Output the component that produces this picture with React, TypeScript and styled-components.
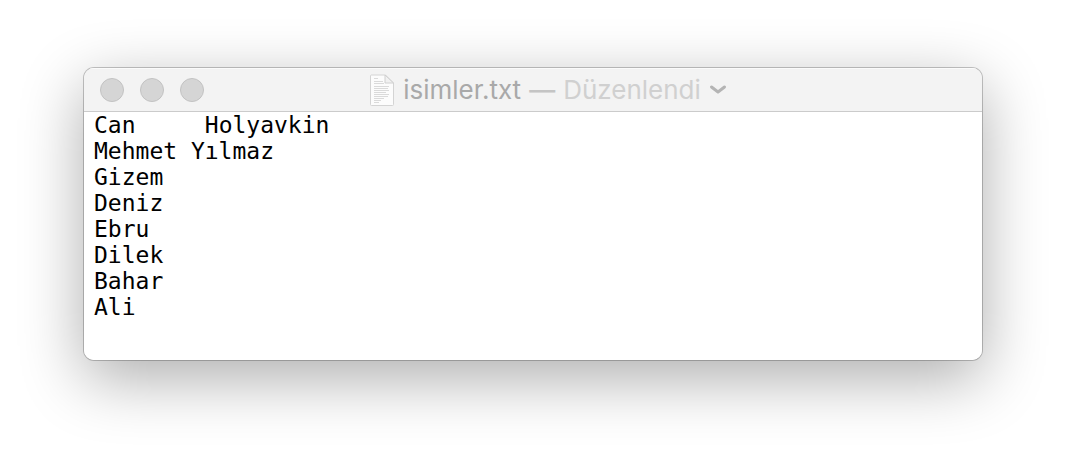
import React from "react";
import styled, { createGlobalStyle } from "styled-components";

const GlobalStyle = createGlobalStyle`
  *, *::before, *::after { box-sizing: border-box; }
  body { margin: 0; background: #fff; }
`;

const Desktop = styled.main`
  padding: 68px 84px 100px;
  overflow: hidden;
`;

const Window = styled.section`
  overflow: hidden;
  border-radius: 10px;
  background: #fff;
  box-shadow: 0 0 0 1px rgba(0, 0, 0, 0.22), 0 18px 64px rgba(0, 0, 0, 0.33);
`;

const TitleBar = styled.header`
  display: flex;
  align-items: center;
  height: 44px;
  padding: 0 90px 0 16px;
  background: #f3f3f3;
  border-bottom: 1px solid #cbcbcb;
  box-shadow: inset 0 1px 0 #fbfbfb;
`;

const WindowControls = styled.div`
  display: flex;
  gap: 16px;
`;

const ControlButton = styled.button`
  width: 24px;
  height: 24px;
  padding: 0;
  border: 1px solid #c2c2c2;
  border-radius: 50%;
  background: #d5d5d5;
`;

const Title = styled.h1`
  display: flex;
  flex: 1;
  align-items: center;
  justify-content: center;
  gap: 8px;
  margin: 0;
  color: #a9a9a9;
  font: 400 26px/32px Inter, "Liberation Sans", sans-serif;
  white-space: nowrap;
`;

const FileIcon = styled.svg`
  width: 26px;
  height: 34px;
`;

const Dash = styled.span`
  color: #c4c4c4;
  font-weight: 500;
`;

const StatusButton = styled.button`
  display: flex;
  align-items: center;
  gap: 8px;
  padding: 0;
  border: 0;
  background: none;
  color: #d0d0d0;
  font: inherit;
`;

const Editor = styled.textarea`
  display: block;
  width: 100%;
  padding: 0 10px 40px;
  border: 0;
  outline: 0;
  resize: none;
  overflow: hidden;
  background: #fff;
  color: #000;
  font: 23px/26px "DejaVu Sans Mono", "Liberation Mono", monospace;
  tab-size: 8;
`;

const controls = ["Kapat", "Küçült", "Büyüt"];

const lines = [
  "Can\tHolyavkin",
  "Mehmet Yılmaz",
  "Gizem",
  "Deniz",
  "Ebru",
  "Dilek",
  "Bahar",
  "Ali",
];

function DocumentIcon() {
  return (
    <FileIcon viewBox="0 0 26 34" aria-hidden="true">
      <path d="M2 2h14.500l8 8v21.500q0 1-1 1H2.500q-1 0-1-1V2.500z" fill="#fcfcfc" stroke="#d4d4d4" strokeLinejoin="round" />
      <path d="M16 2v8h8.500z" fill="#f1f1f1" stroke="#d0d0d0" strokeLinejoin="round" />
      <path
        d="M5 5.500h4M5 8.500h9M5 10.500h10M5 13.500h15M5 15.500h14M5 17.500h15M5 19.500h12M5 21.500h15M5 23.500h14M5 25.500h10M5 27.500h7M5 29.500h5"
        fill="none"
        stroke="#dadada"
        strokeWidth="1"
      />
    </FileIcon>
  );
}

export default function App() {
  return (
    <>
      <GlobalStyle />
      <Desktop>
        <Window>
          <TitleBar>
            <WindowControls>
              {controls.map((label) => (
                <ControlButton key={label} type="button" aria-label={label} />
              ))}
            </WindowControls>
            <Title>
              <DocumentIcon />
              <span>isimler.txt</span>
              <Dash>—</Dash>
              <StatusButton type="button">
                Düzenlendi
                <svg width="18" height="12" viewBox="0 0 18 12" aria-hidden="true">
                  <path d="M2.500 3l6.500 5L15.500 3" fill="none" stroke="#b4b4b4" strokeWidth="3" strokeLinecap="round" strokeLinejoin="round" />
                </svg>
              </StatusButton>
            </Title>
          </TitleBar>
          <Editor aria-label="isimler.txt" rows={8} spellCheck={false} defaultValue={lines.join("\n")} />
        </Window>
      </Desktop>
    </>
  );
}
